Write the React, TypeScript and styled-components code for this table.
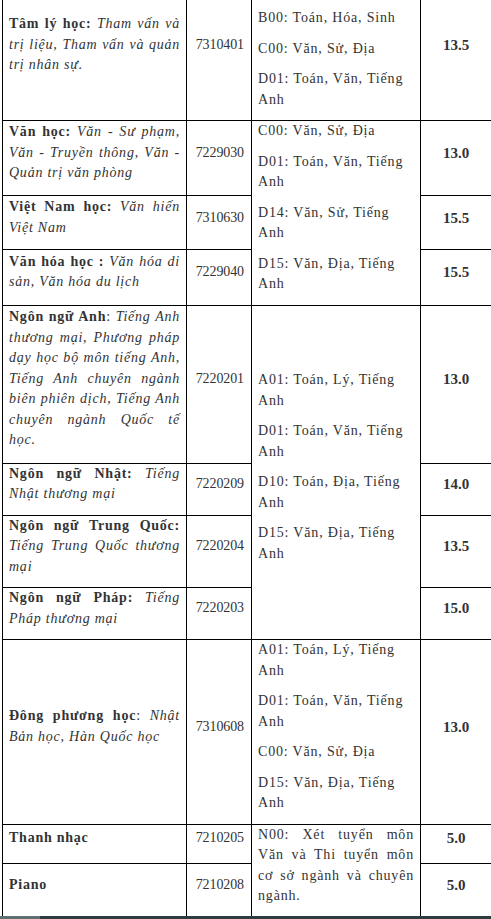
import styled, { createGlobalStyle } from "styled-components"

const GlobalStyle = createGlobalStyle`
	html, body {
		margin: 0;
		padding: 0;
		background: #ffffff;
	}
	body {
		font-family: "Liberation Serif", "Times New Roman", serif;
		color: #333333;
	}
`

const Page = styled.div`
	width: 491px;
	height: 919px;
	overflow: hidden;
	display: flex;
	flex-direction: column;
`

const TableWrap = styled.div`
	flex: 1;
	overflow: hidden;
	padding-left: 2px;
`

const Table = styled.table`
	width: 489px;
	margin-top: -21px;
	border-collapse: collapse;
	table-layout: fixed;
	font-family: "Liberation Serif", "Times New Roman", serif;
	color: #333333;
	font-size: 14px;
	line-height: 20.5px;
`

const Row = styled.tr<{ $h: number }>`
	height: ${({ $h }) => $h}px;
`

const Cell = styled.td<{ $valign?: string }>`
	border: 1px solid #000000;
	padding: 0 6px;
	vertical-align: ${({ $valign }) => $valign || "middle"};
	text-align: left;
`

const NameCell = styled(Cell)`
	text-align: justify;
	letter-spacing: 0.76px;
`

const CodeCell = styled(Cell)`
	text-align: right;
	letter-spacing: -0.1px;
	padding-right: 7px;
`

const ComboCell = styled(Cell)<{ $pt?: number }>`
	padding-top: ${({ $pt }) => $pt || 0}px;
	letter-spacing: 0.82px;
`

const ScoreCell = styled(Cell)`
	text-align: center;
	font-weight: bold;
	font-size: 15px;
`

const P = styled.p<{ $justify?: boolean }>`
	margin: 0 0 10px;
	text-align: ${({ $justify }) => ($justify ? "justify" : "inherit")};
`

const Bottom = styled.div`
	height: 3px;
	background: linear-gradient(to right, #5f7070 0, #5f7070 40px, #2f3b3f 40px);
`

type Major = {
	title: string
	sep: string
	sepBold?: boolean
	desc: string
	code: string
	score?: string
	h: number
	combos?: { items: string[]; span: number; valign?: string; justify?: boolean; pt?: number }
}

const majors: Major[] = [
	{
		title: "Tâm lý học",
		sep: ": ",
		sepBold: true,
		desc: "Tham vấn và trị liệu, Tham vấn và quản trị nhân sự.",
		code: "7310401",
		score: "13.5",
		h: 140,
		combos: {
			items: ["B00: Toán, Hóa, Sinh", "C00: Văn, Sử, Địa", "D01: Toán, Văn, Tiếng Anh"],
			span: 1,
			valign: "top",
			pt: 28,
		},
	},
	{
		title: "Văn học",
		sep: ": ",
		sepBold: true,
		desc: "Văn - Sư phạm, Văn - Truyền thông, Văn - Quản trị văn phòng",
		code: "7229030",
		score: "13.0",
		h: 75,
		combos: {
			items: ["C00: Văn, Sử, Địa", "D01: Toán, Văn, Tiếng Anh", "D14: Văn, Sử, Tiếng Anh", "D15: Văn, Địa, Tiếng Anh"],
			span: 3,
			valign: "top",
		},
	},
	{ title: "Việt Nam học", sep: ": ", sepBold: true, desc: "Văn hiến Việt Nam", code: "7310630", score: "15.5", h: 54 },
	{ title: "Văn hóa học", sep: " : ", sepBold: true, desc: "Văn hóa di sản, Văn hóa du lịch", code: "7229040", score: "15.5", h: 55 },
	{
		title: "Ngôn ngữ Anh",
		sep: ": ",
		desc: "Tiếng Anh thương mại, Phương pháp dạy học bộ môn tiếng Anh, Tiếng Anh chuyên ngành biên phiên dịch, Tiếng Anh chuyên ngành Quốc tế học.",
		code: "7220201",
		score: "13.0",
		h: 158,
		combos: {
			items: ["A01: Toán, Lý, Tiếng Anh", "D01: Toán, Văn, Tiếng Anh", "D10: Toán, Địa, Tiếng Anh", "D15: Văn, Địa, Tiếng Anh"],
			span: 4,
		},
	},
	{ title: "Ngôn ngữ Nhật", sep: ": ", sepBold: true, desc: "Tiếng Nhật thương mại", code: "7220209", score: "14.0", h: 51 },
	{ title: "Ngôn ngữ Trung Quốc", sep: ": ", sepBold: true, desc: "Tiếng Trung Quốc thương mại", code: "7220204", score: "13.5", h: 72 },
	{ title: "Ngôn ngữ Pháp", sep: ": ", sepBold: true, desc: "Tiếng Pháp thương mại", code: "7220203", score: "15.0", h: 52 },
	{
		title: "Đông phương học",
		sep: ": ",
		desc: "Nhật Bản học, Hàn Quốc học",
		code: "7310608",
		score: "13.0",
		h: 184,
		combos: {
			items: ["A01: Toán, Lý, Tiếng Anh", "D01: Toán, Văn, Tiếng Anh", "C00: Văn, Sử, Địa", "D15: Văn, Địa, Tiếng Anh"],
			span: 1,
			valign: "top",
		},
	},
	{
		title: "Thanh nhạc",
		sep: "",
		desc: "",
		code: "7210205",
		score: "5.0",
		h: 39,
		combos: {
			items: ["N00: Xét tuyển môn Văn và Thi tuyển môn cơ sở ngành và chuyên ngành."],
			span: 2,
			valign: "top",
			justify: true,
		},
	},
	{ title: "Piano", sep: "", desc: "", code: "7210208", score: "5.0", h: 54 },
]

export default function App() {
	return (
		<Page>
			<GlobalStyle />
			<TableWrap>
				<Table>
					<colgroup>
						<col style={{ width: 184 }} />
						<col style={{ width: 65 }} />
						<col style={{ width: 169 }} />
						<col style={{ width: 71 }} />
					</colgroup>
					<tbody>
						{majors.map((m) => (
							<Row $h={m.h} key={m.code}>
								<NameCell>
									<P>
										<b>{m.title}</b>
										{m.sepBold ? <b>{m.sep}</b> : m.sep}
										{m.desc && <i>{m.desc}</i>}
									</P>
								</NameCell>
								<CodeCell>
									<P>{m.code}</P>
								</CodeCell>
								{m.combos && (
									<ComboCell $pt={m.combos.pt} $valign={m.combos.valign} rowSpan={m.combos.span}>
										{m.combos.items.map((c) => (
											<P $justify={m.combos?.justify} key={c}>
												{c}
											</P>
										))}
									</ComboCell>
								)}
								<ScoreCell>
									<P>{m.score}</P>
								</ScoreCell>
							</Row>
						))}
					</tbody>
				</Table>
			</TableWrap>
			<Bottom />
		</Page>
	)
}
